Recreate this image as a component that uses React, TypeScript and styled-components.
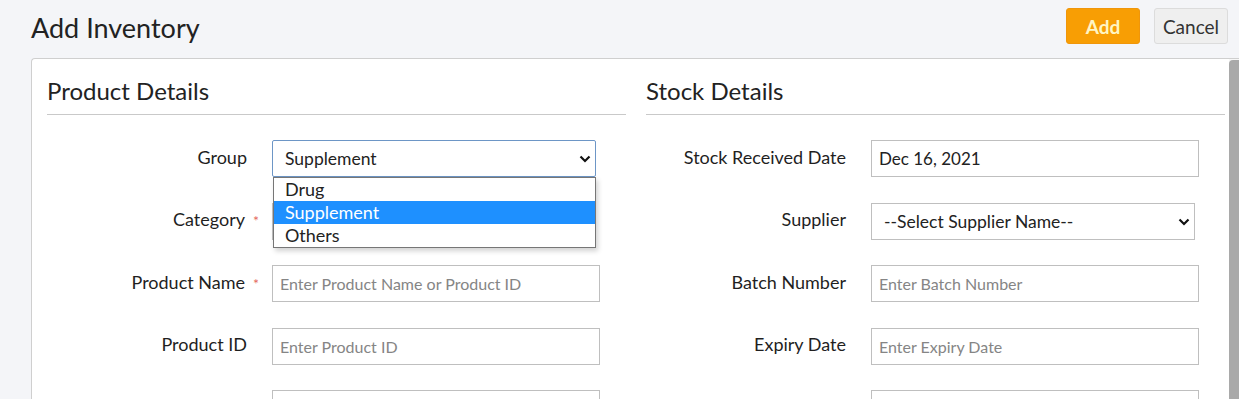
import styled, { createGlobalStyle } from "styled-components";

const GlobalStyle = createGlobalStyle`
  body {
    margin: 0;
    overflow: hidden;
    background: #f4f5f8;
    font-family: Lato, "Open Sans", sans-serif;
    color: #222;
  }
`;

const Header = styled.div`
  display: flex;
  align-items: center;
  height: 58px;
  padding: 0 11px 0 31px;
  box-sizing: border-box;
`;

const PageTitle = styled.h1`
  flex: 1;
  margin: 0 0 4px 0;
  font-size: 27px;
  font-weight: 400;
  color: #222;
`;

const Button = styled.button<{ $primary?: boolean }>`
  width: 74px;
  height: 36px;
  margin: 0 0 6px 14px;
  border-radius: 3px;
  font-family: Lato, sans-serif;
  font-size: 19px;
  font-weight: ${({ $primary }) => ($primary ? 700 : 400)};
  color: ${({ $primary }) => ($primary ? "#fff6c4" : "#333")};
  background: ${({ $primary }) => ($primary ? "#f89e04" : "#efefef")};
  border: 1px solid ${({ $primary }) => ($primary ? "#f0960a" : "#dcdcdc")};
`;

const Panel = styled.div`
  display: flex;
  margin-left: 31px;
  height: 360px;
  background: #fff;
  border: 1px solid #cfcfcf;
  border-right: none;
  border-radius: 4px 0 0 0;
  overflow: hidden;
`;

const Columns = styled.div`
  flex: 1;
  display: grid;
  grid-template-columns: 1fr 1fr;
  column-gap: 20px;
  padding: 0 4px 40px 15px;
`;

const ScrollTrack = styled.div`
  width: 10px;
  padding-top: 1px;
  background: #f7f7f7;
`;

const ScrollThumb = styled.div`
  height: 100%;
  background: #a9a9a9;
  border-radius: 4px 0 0 0;
`;

const SectionTitle = styled.h2`
  margin: 0 0 25px 0;
  padding: 17px 0 9px 0;
  font-size: 24px;
  font-weight: 400;
  color: #222;
  border-bottom: 1px solid #c9c9c9;
`;

const Row = styled.div`
  display: grid;
  grid-template-columns: 225px auto;
  align-items: center;
  height: 37px;
  margin-bottom: 25.5px;
`;

const Label = styled.label<{ $required?: boolean }>`
  text-align: right;
  padding-right: ${({ $required }) => ($required ? "13px" : "25px")};
  margin-top: -4px;
  font-size: 18px;
  color: #1f1f1f;
`;

const Star = styled.span`
  margin-left: 8px;
  font-size: 14px;
  color: #e46a5e;
`;

const Input = styled.input`
  width: 328px;
  height: 37px;
  box-sizing: border-box;
  padding: 0 7px;
  border: 1px solid #bfbfbf;
  border-radius: 0;
  font-family: Lato, sans-serif;
  font-size: 17px;
  color: #222;
  outline: none;

  &::placeholder {
    font-size: 16px;
    color: #858585;
  }
`;

const SelectWrap = styled.div`
  position: relative;
  width: 324px;
  height: 37px;
`;

const Select = styled.select<{ $focused?: boolean }>`
  appearance: none;
  width: 100%;
  height: 100%;
  box-sizing: border-box;
  padding: 0 0 0 12px;
  border: 1px solid ${({ $focused }) => ($focused ? "#6d96c6" : "#bfbfbf")};
  border-radius: ${({ $focused }) => ($focused ? "2px" : "0")};
  background: #fff;
  font-family: Lato, sans-serif;
  font-size: 17.5px;
  color: #222;
  outline: none;
`;

const Chevron = styled.svg`
  position: absolute;
  right: 5px;
  top: 15px;
  pointer-events: none;
`;

const OptionList = styled.ul`
  position: absolute;
  z-index: 2;
  top: 37px;
  left: 1px;
  width: 323px;
  margin: 0;
  padding: 0;
  list-style: none;
  box-sizing: border-box;
  background: #fff;
  border: 1px solid #767676;
  box-shadow: 2px 3px 5px rgba(0, 0, 0, 0.18);
`;

const Option = styled.li<{ $active?: boolean }>`
  height: 23px;
  line-height: 23px;
  padding-left: 11px;
  font-size: 18px;
  color: ${({ $active }) => ($active ? "#fff" : "#222")};
  background: ${({ $active }) => ($active ? "#1e90ff" : "#fff")};
`;

const Arrow = () => (
  <Chevron width="12" height="8" viewBox="0 0 12 8">
    <path d="M1.5 1.5 L6 6 L10.5 1.5" fill="none" stroke="#111" strokeWidth="2.2" />
  </Chevron>
);

type Field = {
  label: string;
  required?: boolean;
  kind: "input" | "select";
  value?: string;
  placeholder?: string;
  open?: string[];
};

// the last row of each column is only visible as the top edge of its input
const productFields: Field[] = [
  { label: "Group", kind: "select", value: "Supplement", open: ["Drug", "Supplement", "Others"] },
  { label: "Category", required: true, kind: "select", value: "--Select Category--" },
  { label: "Product Name", required: true, kind: "input", placeholder: "Enter Product Name or Product ID" },
  { label: "Product ID", kind: "input", placeholder: "Enter Product ID" },
  { label: "", kind: "input" },
];

const stockFields: Field[] = [
  { label: "Stock Received Date", kind: "input", value: "Dec 16, 2021" },
  { label: "Supplier", kind: "select", value: "--Select Supplier Name--" },
  { label: "Batch Number", kind: "input", placeholder: "Enter Batch Number" },
  { label: "Expiry Date", kind: "input", placeholder: "Enter Expiry Date" },
  { label: "", kind: "input" },
];

const FieldRow = ({ field }: { field: Field }) => (
  <Row>
    <Label $required={field.required}>
      {field.label}
      {field.required && <Star>*</Star>}
    </Label>
    {field.kind === "input" ? (
      <Input defaultValue={field.value} placeholder={field.placeholder} />
    ) : (
      <SelectWrap>
        <Select $focused={!!field.open} defaultValue={field.value}>
          <option>{field.value}</option>
        </Select>
        <Arrow />
        {field.open && (
          <OptionList>
            {field.open.map((o) => (
              <Option key={o} $active={o === field.value}>
                {o}
              </Option>
            ))}
          </OptionList>
        )}
      </SelectWrap>
    )}
  </Row>
);

const App = () => {
  return (
    <>
      <GlobalStyle />
      <Header>
        <PageTitle>Add Inventory</PageTitle>
        <Button $primary>Add</Button>
        <Button>Cancel</Button>
      </Header>
      <Panel>
        <Columns>
          <div>
            <SectionTitle>Product Details</SectionTitle>
            {productFields.map((f, i) => (
              <FieldRow key={i} field={f} />
            ))}
          </div>
          <div>
            <SectionTitle>Stock Details</SectionTitle>
            {stockFields.map((f, i) => (
              <FieldRow key={i} field={f} />
            ))}
          </div>
        </Columns>
        <ScrollTrack>
          <ScrollThumb />
        </ScrollTrack>
      </Panel>
    </>
  );
};

export default App;
